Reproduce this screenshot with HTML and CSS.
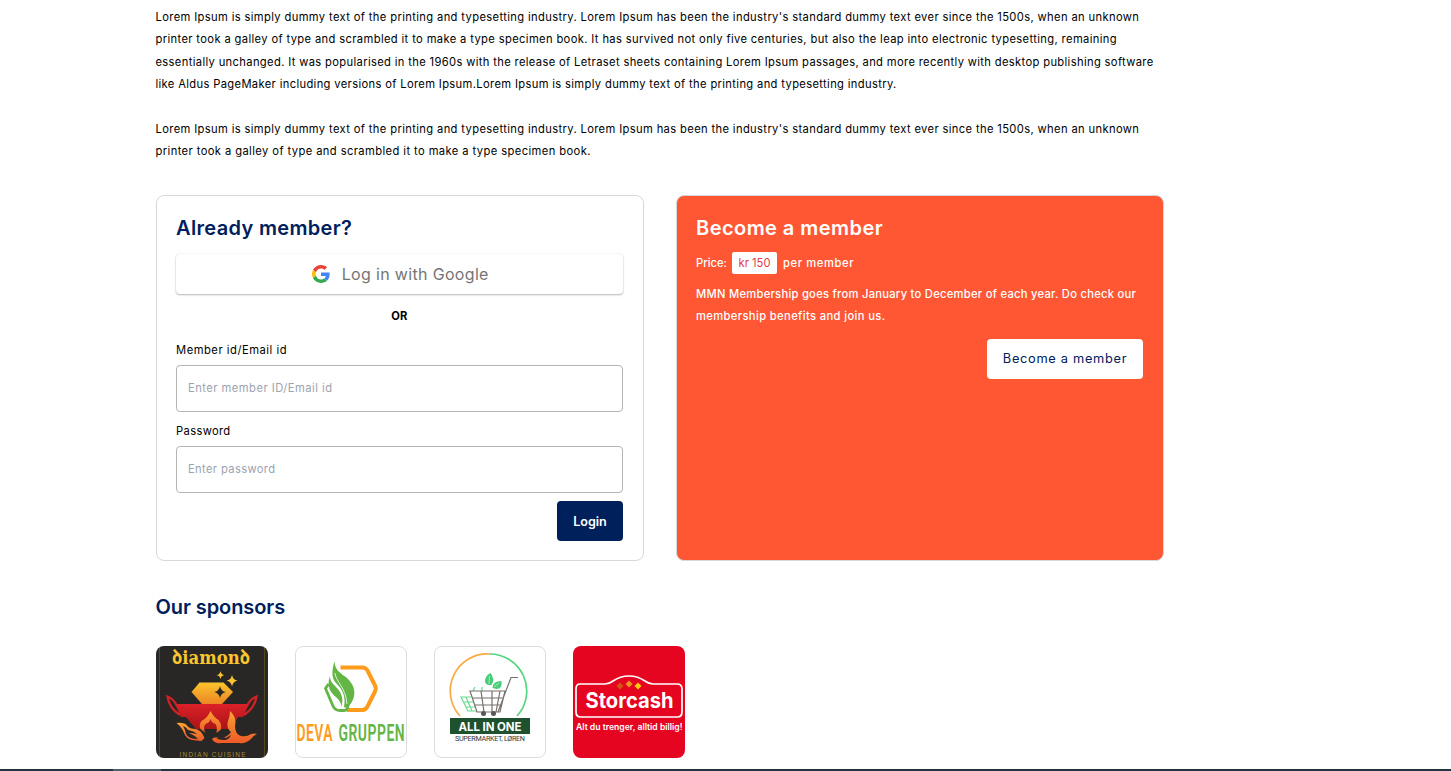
FILE: index.html
```html
<!DOCTYPE html>
<html lang="en">
<head>
<meta charset="utf-8">
<title>Membership</title>
<link rel="stylesheet" href="styles.css">
</head>
<body>
<main class="page">
  <section class="intro">
    <p><span class="line l1">Lorem Ipsum is simply dummy text of the printing and typesetting industry. Lorem Ipsum has been the industry's standard dummy text ever since the 1500s, when an unknown</span>
    <span class="line l2">printer took a galley of type and scrambled it to make a type specimen book. It has survived not only five centuries, but also the leap into electronic typesetting, remaining</span>
    <span class="line l3">essentially unchanged. It was popularised in the 1960s with the release of Letraset sheets containing Lorem Ipsum passages, and more recently with desktop publishing software</span>
    <span class="line l4">like Aldus PageMaker including versions of Lorem Ipsum.Lorem Ipsum is simply dummy text of the printing and typesetting industry.</span></p>
    <p><span class="line l1">Lorem Ipsum is simply dummy text of the printing and typesetting industry. Lorem Ipsum has been the industry's standard dummy text ever since the 1500s, when an unknown</span>
    <span class="line l5">printer took a galley of type and scrambled it to make a type specimen book.</span></p>
  </section>

  <section class="cards">
    <form class="card">
      <h2 class="title title-login">Already member?</h2>
      <button type="button" class="google">
        <svg class="google-icon" viewBox="0 0 48 48"><path fill="#ea4335" d="M24 9.5c3.54 0 6.71 1.22 9.21 3.6l6.85-6.85C35.9 2.38 30.47 0 24 0 14.62 0 6.51 5.38 2.56 13.22l7.98 6.19C12.43 13.72 17.74 9.5 24 9.5z"/><path fill="#4285f4" d="M46.98 24.55c0-1.57-.15-3.09-.38-4.55H24v9.02h12.94c-.58 2.96-2.26 5.48-4.78 7.18l7.73 6c4.51-4.18 7.09-10.36 7.09-17.65z"/><path fill="#fbbc05" d="M10.53 28.59c-.48-1.45-.76-2.99-.76-4.59s.27-3.14.76-4.59l-7.98-6.19C.92 16.46 0 20.12 0 24c0 3.88.92 7.54 2.56 10.78l7.97-6.19z"/><path fill="#34a853" d="M24 48c6.48 0 11.93-2.13 15.89-5.81l-7.73-6c-2.15 1.45-4.92 2.3-8.16 2.3-6.26 0-11.57-4.22-13.47-9.91l-7.98 6.19C6.51 42.62 14.62 48 24 48z"/></svg>
        <span>Log in with Google</span>
      </button>
      <div class="or">OR</div>
      <label class="label label-member" for="member">Member id/Email id</label>
      <input class="input input-member" id="member" type="text" placeholder="Enter member ID/Email id">
      <label class="label label-pass" for="pass">Password</label>
      <input class="input input-pass" id="pass" type="password" placeholder="Enter password">
      <button type="button" class="btn btn-login">Login</button>
    </form>
    <div class="card card-join">
      <h2 class="title title-join">Become a member</h2>
      <div class="price"><span class="price-label">Price:</span><span class="badge">kr 150</span><span class="price-unit">per member</span></div>
      <p class="info"><span class="line i1">MMN Membership goes from January to December of each year. Do check our</span><span class="line i2">membership benefits and join us.</span></p>
      <button type="button" class="btn btn-join">Become a member</button>
    </div>
  </section>

  <section class="sponsors">
    <h2 class="title title-sponsors">Our sponsors</h2>
    <div class="logos">
      <svg class="logo" viewBox="0 0 112 112">
        <defs>
          <linearGradient id="gold" x1="0" y1="0" x2="0" y2="1"><stop offset="0" stop-color="#fbc52d"/><stop offset="1" stop-color="#ed8424"/></linearGradient>
          <linearGradient id="bowl" x1="0" y1="0" x2="0" y2="1"><stop offset="0" stop-color="#dc2028"/><stop offset="1" stop-color="#a91518"/></linearGradient>
          <linearGradient id="fire" x1="0" y1="0" x2="0" y2="1"><stop offset="0" stop-color="#f9a235"/><stop offset="1" stop-color="#ee5a27"/></linearGradient>
        </defs>
        <rect width="112" height="112" rx="8" fill="#292725"/>
        <path d="M3.500 2v108M108.500 2v108" stroke="#5b4a20" stroke-width=".9"/>
        <text class="diamond-name" x="16" y="18" textLength="78" lengthAdjust="spacingAndGlyphs">ꝺiamonꝺ</text>
        <path d="M35.500 46l8-9.500h24L77 46 66 58H46z" fill="url(#gold)"/>
        <path d="M64 40q1 5.500 6 6-5 1-6 6-1-5-6-6 5-.5 6-6z" fill="#292725"/>
        <path d="M76 29q1 5 5.500 5.500-4.500 1-5.500 6-1-5-5.500-6 4.500-.5 5.500-5.500zM64.500 25q.7 4 4 4-3.300.5-4 4-.7-3.500-4-4 3.300 0 4-4z" fill="#f9c52f"/>
        <path d="M19 58h74l-6 13H82l-7 12H40l-10-12H25z" fill="url(#bowl)"/>
        <path d="M24 69Q13 62 11.500 50.500 18 53 21 60M88 69q11-7 12.500-18.500Q94 53 91 60" fill="none" stroke="#cf2226" stroke-width="2.200"/>
        <path d="M44.500 83q-2-4 1-8 6-3 9-10 3 6 8 9 4 5 2 10l-4 3q1-6-1-9-4-1-5-5-1 4-5 5-3 4 0 9z" fill="url(#fire)"/>
        <path d="M20.500 77q8-1 11 3 2 3 8 3 6 1 9 9l-3 3-9-1q-6-1-8-6-2-6-8-11z" fill="url(#fire)"/>
        <path d="M27 80q3 1 5 4 6 1 9 4-5-1-8-1 5 2 9 6-10 0-12-5-1-5-3-8z" fill="#292725"/>
        <path d="M74 65q7 6 5 15 0 8 6 10 6 1 10-2 4-1 6 0-3 1-6 5-5 5-12 4H66q-8 1-10-4 2-3 9-1 7-1 10-6-5-4-3-11 2-5 2-10z" fill="url(#fire)"/>
        <path d="M60 92q6-2 10 0l5-3q-2 5-7 5-5 0-8-2z" fill="#292725"/>
        <text class="diamond-sub" x="23.500" y="111" textLength="66">INDIAN CUISINE</text>
      </svg>
      <svg class="logo" viewBox="0 0 112 112">
        <rect x=".5" y=".5" width="111" height="111" rx="7.500" fill="#fff" stroke="#ddd"/>
        <path d="M45.500 21.500h22q3 0 5 3l7.500 15q1.500 3 0 6l-7.500 15q-2 3.500-5 3.500H52" fill="none" stroke="#ff9b1c" stroke-width="4"/>
        <path d="M33.500 38l-3 4.500L38 60q2 4.500 7 4.500h4q4 0 4-6" fill="none" stroke="#63b545" stroke-width="2.800"/>
        <path d="M39.500 15.500C40 25 46 27 52 32c9 8 10 19 2 28-2 2-3 2-5 1 2-10-1-17-8-24-5-5-4-14-1.500-21.500z" fill="#63b545"/>
        <path d="M35 30c-4 11 1 17 6 21 4 4 6 7 5 11 3-9 1-15-5-21-4-4-6-6-6-11z" fill="#63b545"/>
        <path d="M40 27c1 9 11 15 12 31" fill="none" stroke="#fff" stroke-width=".8"/>
        <g class="deva" transform="scale(.58 1)">
          <text x="2.600" y="95" textLength="62" fill="#ff9b1c">DEVA</text>
          <text x="75" y="95" textLength="114" fill="#63b545">GRUPPEN</text>
        </g>
      </svg>
      <svg class="logo" viewBox="0 0 112 112">
        <rect x=".5" y=".5" width="111" height="111" rx="7.500" fill="#fff" stroke="#ddd"/>
        <path d="M26 70A37 37 0 0 1 55 8" fill="none" stroke="#f8aa43" stroke-width="1.700"/>
        <path d="M55 8a37 37 0 0 1 28 62" fill="none" stroke="#55d681" stroke-width="1.700"/>
        <g fill="none" stroke="#68da8e" stroke-width="1.200"><path d="M37 51H27l7 14h9M29 56h10M32 61h9M32 51l6 14M39 45l2-4M48 45v-4"/></g>
        <g fill="none" stroke="#77706d" stroke-width="1.200"><path d="M36 45h35l-5 21H43zM38 52h31M41 59h27M47 45l3 21M58 45v21M66 45l-4 21M64 66l13-34.500h7"/></g>
        <circle cx="49.500" cy="67.500" r="2.500" fill="#5a5655"/><circle cx="59.500" cy="67.500" r="2.500" fill="#5a5655"/>
        <path d="M56.500 27q5 7 1 12-7 1-6.500-5 1-5 5.500-7zM58.500 42q0-7 9-7 1 8-5 8z" fill="#48cc78"/>
        <path d="M55.500 30l-.5 8M60 41l5-4" stroke="#c3f0d1" stroke-width=".8"/>
        <rect x="16" y="72" width="80" height="16" fill="#1e512e"/>
        <text class="all" x="24.500" y="84.500" textLength="63">ALL IN ONE</text>
        <text class="all-sub" x="21" y="95" textLength="70">SUPERMARKET, LØREN</text>
      </svg>
      <svg class="logo" viewBox="0 0 112 112">
        <rect width="112" height="112" rx="8" fill="#e50520"/>
        <path d="M7 38h25q4 0 8-3 7-5 16-5t16 5q4 3 8 3h24q5 0 5 5v23q0 5-5 5H8q-5 0-5-5V43q0-5 4-5z" fill="none" stroke="#fff" stroke-width="1.700"/>
        <path d="M47 36.500l3.500 3.500-3.500 3.500-3.500-3.500z" fill="#d25512"/><path d="M56 34.500l3.500 3.500-3.500 3.500-3.500-3.500z" fill="#ee951c"/><path d="M65 36.500l3.500 3.500-3.500 3.500-3.500-3.500z" fill="#ffca0b"/>
        <text class="store" x="12.500" y="62" textLength="88" lengthAdjust="spacingAndGlyphs">Storcash</text>
        <text class="store-sub" x="3" y="84" textLength="106.500" lengthAdjust="spacingAndGlyphs">Alt du trenger, alltid billig!</text>
      </svg>
    </div>
  </section>
</main>
<footer class="edge"><div class="edge-thumb"></div></footer>
</body>
</html>
```
FILE: styles.css
```css
* { box-sizing: border-box; }
body { margin: 0; height: 771px; overflow: hidden; display: flex; flex-direction: column; background: #fff; color: #000; font: 11.2px/22.4px Inter, sans-serif; }
h2, p { margin: 0; }
.page { flex: 1; min-height: 0; padding: 5.9px 287px 0 155.500px; overflow: hidden; }
.intro { display: flex; flex-direction: column; gap: 22.4px; }
.line { display: block; white-space: nowrap; }
.l1, .l2 { letter-spacing: .36px; }
.l3, .l4 { letter-spacing: .345px; }
.l5 { letter-spacing: .4px; }
.cards { display: grid; grid-template-columns: 488px 488px; gap: 32.500px; margin-top: 32.700px; }
.card { height: 366px; display: flex; flex-direction: column; border: 1px solid #d6d8da; border-radius: 8px; padding: 17px 20px 19px 19.500px; }
.card-join { background: #ff5734; color: #fff; font-weight: 500; padding-left: 19px; }
.title { font-size: 20px; line-height: 30px; font-weight: 600; color: #00205b; white-space: nowrap; }
.title-login { letter-spacing: .33px; }
.title-join { color: #fff; letter-spacing: .45px; }
.title-sponsors { letter-spacing: -.08px; }
.google { display: flex; align-items: center; justify-content: center; gap: 12px; height: 40px; margin-top: 11px; flex: none; border: 0; border-radius: 4px; padding: 0 0 0 2px; background: #fff; color: #757575; font: 400 16px/24px Inter, sans-serif; letter-spacing: .33px; box-shadow: 0 1px 2px rgba(0,0,0,.28), 0 0 1px rgba(0,0,0,.16); }
.google-icon { width: 18px; height: 18px; }
.or { text-align: center; font-weight: 700; margin-top: 11px; line-height: 22px; }
.label { margin-top: 12px; line-height: 22px; letter-spacing: .35px; }
.label-member { letter-spacing: .52px; }
.input { flex: none; height: 47px; margin-top: 4px; border: 1px solid #b5b5b5; border-radius: 4px; padding: 0 11px 1px; background: #fff; font: 400 11.2px Inter, sans-serif; letter-spacing: .36px; }
.input-member { letter-spacing: .47px; }
.input::placeholder { color: #9ca3af; opacity: 1; }
.label-pass { margin-top: 8px; }
.btn { flex: none; align-self: flex-end; height: 40px; border: 0; border-radius: 4px; padding: 0; white-space: nowrap; }
.btn-login { width: 66px; margin-top: 8px; padding-left: 1px; background: #00205b; color: #fff; font: 600 12.600px Inter, sans-serif; }
.btn-join { width: 156px; margin-top: 12px; padding-bottom: 2px; background: #fff; color: #00205b; font: 400 12.800px Inter, sans-serif; letter-spacing: .7px; }
.price { display: flex; align-items: center; height: 22px; margin-top: 9px; }
.price-label { width: 36px; }
.price-unit { letter-spacing: .6px; }
.badge { width: 45px; height: 22px; line-height: 22px; text-align: center; border-radius: 2px; background: #fff; color: #e63b4b; font-weight: 400; margin-right: 6px; }
.info { margin-top: 9px; line-height: 22px; }
.i1 { letter-spacing: .27px; }
.i2 { letter-spacing: .37px; }
.sponsors { margin-top: 31px; }
.logos { display: flex; gap: 27px; margin-top: 24px; }
.logo { width: 112px; height: 112px; display: block; }
.diamond-name { font: 700 19px "DejaVu Serif", "Noto Sans", serif; fill: #fac52f; }
.diamond-sub { font: 400 6.500px "Liberation Sans", sans-serif; fill: #a88c32; }
.deva { font: 600 24px Roboto, sans-serif; }
.all { font: 700 11.500px Inter, sans-serif; fill: #fff; }
.all-sub { font: 400 7.200px Roboto, sans-serif; fill: #33383a; }
.store { font: 700 21px Inter, sans-serif; fill: #fff; }
.store-sub { font: 600 8.400px Inter, sans-serif; fill: #fff; }
.edge { flex: none; height: 2px; background: #203440; }
.edge-thumb { width: 48px; height: 2px; margin-left: 113px; background: #50606a; }
```
